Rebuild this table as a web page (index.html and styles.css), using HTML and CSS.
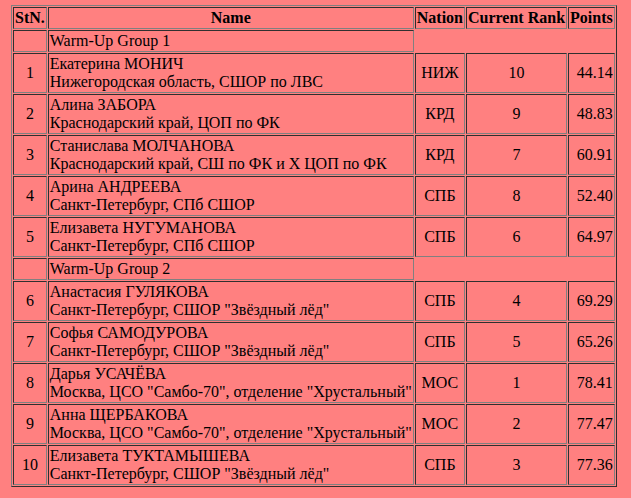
FILE: index.html
```html
<!DOCTYPE html>
<html>
<head>
<meta charset="utf-8">
<link rel="stylesheet" href="styles.css">
</head>
<body>
<table class="startlist">
<tr><th>StN.</th><th>Name</th><th>Nation</th><th>Current Rank</th><th>Points</th></tr>
<tr><td></td><td>Warm-Up Group 1</td></tr>
<tr><td class="c">1</td><td>Екатерина МОНИЧ<br>Нижегородская область, СШОР по ЛВС</td><td class="c">НИЖ</td><td class="c">10</td><td class="r">44.14</td></tr>
<tr><td class="c">2</td><td>Алина ЗАБОРА<br>Краснодарский край, ЦОП по ФК</td><td class="c">КРД</td><td class="c">9</td><td class="r">48.83</td></tr>
<tr><td class="c">3</td><td>Станислава МОЛЧАНОВА<br>Краснодарский край, СШ по ФК и Х ЦОП по ФК</td><td class="c">КРД</td><td class="c">7</td><td class="r">60.91</td></tr>
<tr><td class="c">4</td><td>Арина АНДРЕЕВА<br>Санкт-Петербург, СПб СШОР</td><td class="c">СПБ</td><td class="c">8</td><td class="r">52.40</td></tr>
<tr><td class="c">5</td><td>Елизавета НУГУМАНОВА<br>Санкт-Петербург, СПб СШОР</td><td class="c">СПБ</td><td class="c">6</td><td class="r">64.97</td></tr>
<tr><td></td><td>Warm-Up Group 2</td></tr>
<tr><td class="c">6</td><td>Анастасия ГУЛЯКОВА<br>Санкт-Петербург, СШОР "Звёздный лёд"</td><td class="c">СПБ</td><td class="c">4</td><td class="r">69.29</td></tr>
<tr><td class="c">7</td><td>Софья САМОДУРОВА<br>Санкт-Петербург, СШОР "Звёздный лёд"</td><td class="c">СПБ</td><td class="c">5</td><td class="r">65.26</td></tr>
<tr><td class="c">8</td><td>Дарья УСАЧЁВА<br>Москва, ЦСО "Самбо-70", отделение "Хрустальный"</td><td class="c">МОС</td><td class="c">1</td><td class="r">78.41</td></tr>
<tr><td class="c">9</td><td>Анна ЩЕРБАКОВА<br>Москва, ЦСО "Самбо-70", отделение "Хрустальный"</td><td class="c">МОС</td><td class="c">2</td><td class="r">77.47</td></tr>
<tr><td class="c">10</td><td>Елизавета ТУКТАМЫШЕВА<br>Санкт-Петербург, СШОР "Звёздный лёд"</td><td class="c">СПБ</td><td class="c">3</td><td class="r">77.36</td></tr>
</table>
</body>
</html>
```
FILE: styles.css
```css
html, body {
  background: #ff8080;
}
body {
  margin: 5px 11px;
  font-family: "Liberation Serif", "Times New Roman", serif;
  font-size: 16px;
  color: #000;
}
.startlist {
  border: 1px solid;
  border-color: #808080 #303030 #303030 #808080;
  border-spacing: 1px;
  border-collapse: separate;
}
.startlist th,
.startlist td {
  border: 1px solid;
  border-color: #303030 #808080 #808080 #303030;
  padding: 1px;
  vertical-align: middle;
  text-align: left;
}
.startlist th {
  font-weight: bold;
  text-align: center;
}
.startlist td.c {
  text-align: center;
}
.startlist td.r {
  text-align: right;
}
```
